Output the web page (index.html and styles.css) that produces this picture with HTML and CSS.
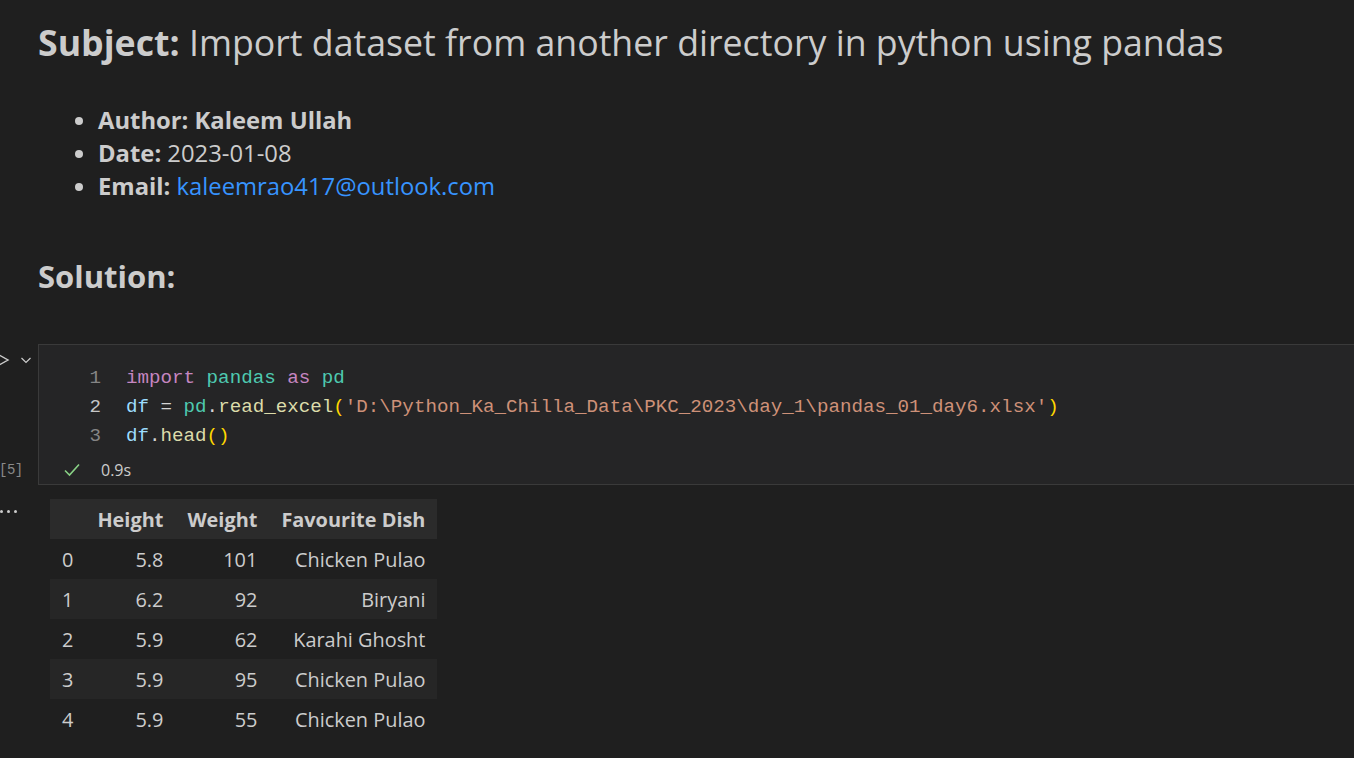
FILE: index.html
```html
<!DOCTYPE html>
<html>
<head>
<meta charset="utf-8">
<link rel="stylesheet" href="styles.css">
</head>
<body>
<div class="md">
  <h1 class="title"><b>Subject:</b> Import dataset from another directory in python using pandas</h1>
  <ul class="meta">
    <li><b>Author: Kaleem Ullah</b></li>
    <li><b>Date:</b> 2023-01-08</li>
    <li><b>Email:</b> <a class="link">kaleemrao417@outlook.com</a></li>
  </ul>
  <h2 class="sol">Solution:</h2>
</div>
<div class="cell-row">
  <div class="gutter">
    <div class="run">
      <svg width="12" height="14" viewBox="0 0 12 14"><path d="M1 2 L10 7 L1 12" fill="none" stroke="#cccccc" stroke-width="1.4"/></svg>
      <svg class="chev" width="12" height="10" viewBox="0 0 12 10"><path d="M1.5 3 L6 7.5 L10.5 3" fill="none" stroke="#cccccc" stroke-width="1.2"/></svg>
    </div>
    <div class="count">[5]</div>
  </div>
  <div class="cell">
    <div class="code">
      <div class="ln"><span class="num">1</span><span class="kw">import</span> <span class="mod">pandas</span> <span class="kw">as</span> <span class="mod">pd</span></div>
      <div class="ln"><span class="num active">2</span><span class="var">df</span> = <span class="mod">pd</span>.<span class="fn">read_excel</span><span class="br">(</span><span class="str">'D:\Python_Ka_Chilla_Data\PKC_2023\day_1\pandas_01_day6.xlsx'</span><span class="br">)</span></div>
      <div class="ln"><span class="num">3</span><span class="var">df</span>.<span class="fn">head</span><span class="br">()</span></div>
    </div>
    <div class="status">
      <svg width="18" height="16" viewBox="0 0 18 16"><path d="M2 8.5 L6.5 13 L16 2.5" fill="none" stroke="#89d185" stroke-width="1.6"/></svg>
      <span class="time">0.9s</span>
    </div>
  </div>
</div>
<div class="out-row">
  <div class="gutter"><div class="dots"><span></span><span></span><span></span></div></div>
  <div class="output">
    <table class="df">
      <thead>
        <tr><th></th><th>Height</th><th>Weight</th><th>Favourite Dish</th></tr>
      </thead>
      <tbody>
        <tr><td class="idx">0</td><td>5.8</td><td>101</td><td>Chicken Pulao</td></tr>
        <tr><td class="idx">1</td><td>6.2</td><td>92</td><td>Biryani</td></tr>
        <tr><td class="idx">2</td><td>5.9</td><td>62</td><td>Karahi Ghosht</td></tr>
        <tr><td class="idx">3</td><td>5.9</td><td>95</td><td>Chicken Pulao</td></tr>
        <tr><td class="idx">4</td><td>5.9</td><td>55</td><td>Chicken Pulao</td></tr>
      </tbody>
    </table>
  </div>
</div>
</body>
</html>
```
FILE: styles.css
```css
html, body {
  margin: 0;
  padding: 0;
  background: #1f1f1f;
  color: #cccccc;
  font-family: "Open Sans", "Noto Sans", sans-serif;
  overflow: hidden;
}
.md {
  padding-left: 38px;
}
.title {
  margin: 0;
  padding-top: 19px;
  font-size: 35.7px;
  font-weight: 400;
  line-height: 46px;
  color: #cccccc;
  white-space: nowrap;
}
.title b { font-weight: 700; }
.meta {
  margin: 0;
  padding: 0;
  margin-top: 39px;
  padding-left: 60px;
  font-size: 23.8px;
  line-height: 33px;
}
.meta b { font-weight: 700; }
.link { color: #3794ff; }
.sol {
  margin: 0;
  margin-top: 53px;
  font-size: 31px;
  line-height: 40px;
  font-weight: 700;
}
.cell-row {
  display: flex;
  margin-top: 48px;
  height: 141px;
}
.gutter {
  width: 38px;
  flex: none;
  display: flex;
  flex-direction: column;
  justify-content: space-between;
}
.run {
  display: flex;
  align-items: center;
  gap: 10px;
  margin-top: 9px;
  margin-left: -2px;
}
.count {
  font-family: "Liberation Mono", monospace;
  font-size: 14px;
  color: #8a8a8a;
  margin-bottom: 7px;
  margin-left: -1px;
  letter-spacing: -0.5px;
}
.cell {
  flex: 1;
  background: #252526;
  border: 1px solid #3a3a3a;
  border-right: none;
  display: flex;
  flex-direction: column;
}
.code {
  padding-top: 19px;
  font-family: "Liberation Mono", monospace;
  font-size: 19.2px;
  line-height: 29px;
  color: #d4d4d4;
}
.ln { white-space: pre; height: 29px; }
.num {
  display: inline-block;
  width: 62px;
  text-align: right;
  padding-right: 25px;
  color: #858585;
}
.num.active { color: #c6c6c6; }
.kw { color: #c586c0; }
.mod { color: #4ec9b0; }
.var { color: #9cdcfe; }
.fn { color: #dcdcaa; }
.br { color: #ffd700; }
.str { color: #ce9178; }
.status {
  display: flex;
  align-items: center;
  margin-top: 7px;
  padding-left: 24px;
  gap: 20px;
  height: 24px;
}
.time {
  font-size: 16px;
  color: #cccccc;
}
.out-row {
  display: flex;
  margin-top: 14px;
}
.dots {
  display: flex;
  gap: 4px;
  margin-top: 11px;
  justify-content: flex-start;
}
.dots span {
  width: 3px;
  height: 3px;
  border-radius: 50%;
  background: #cccccc;
}
.output {
  padding-left: 12px;
}
.df {
  border-collapse: collapse;
  font-size: 19.9px;
  color: #cccccc;
}
.df th {
  background: #2b2b2b;
  font-weight: 700;
  height: 40px;
  padding: 0 12px;
  text-align: right;
}
.df td {
  height: 40px;
  padding: 0 12px;
  text-align: right;
}
.df td.idx { text-align: left; }
.df tbody tr:nth-child(even) { background: #262626; }
```
